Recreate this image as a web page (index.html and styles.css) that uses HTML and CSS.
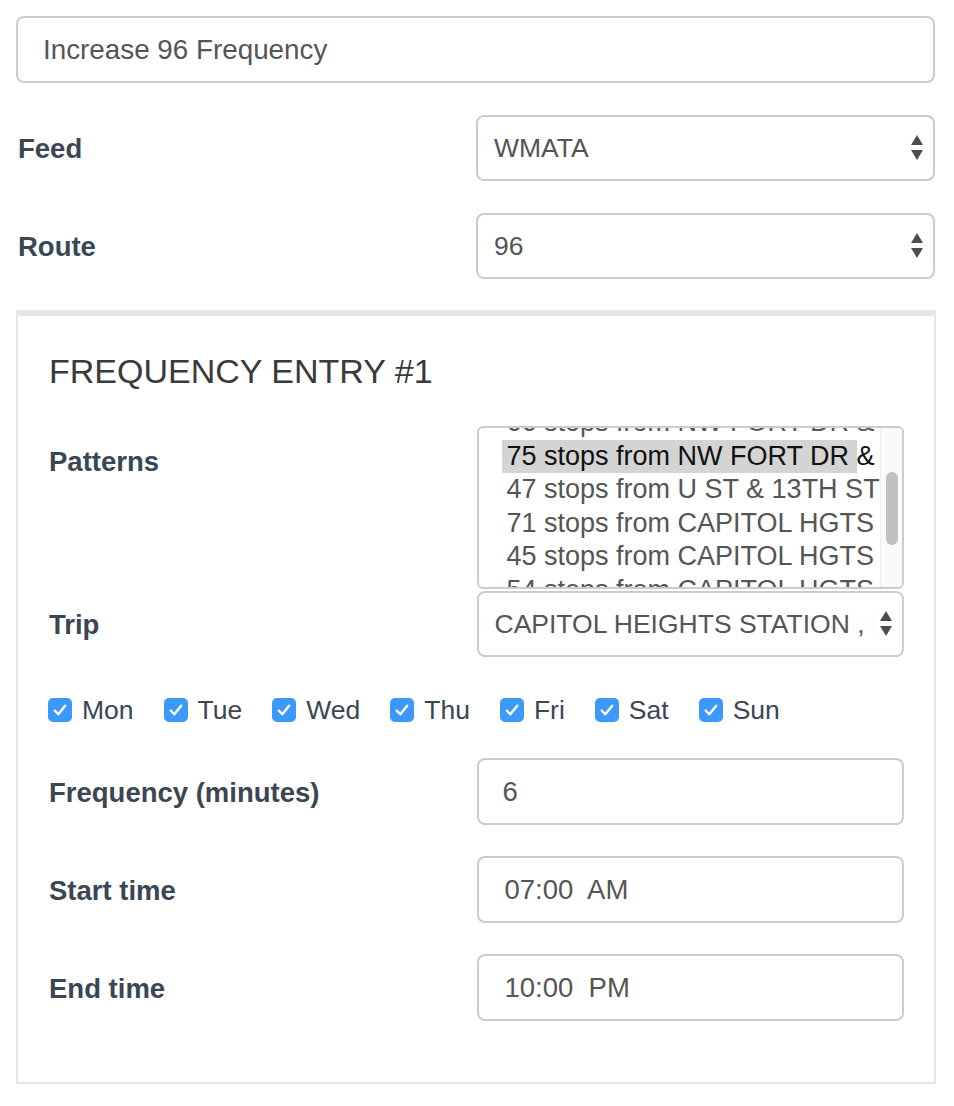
FILE: index.html
```html
<!DOCTYPE html>
<html lang="en">
<head>
<meta charset="utf-8">
<title>Increase 96 Frequency</title>
<link rel="stylesheet" href="styles.css">
</head>
<body>
<div class="page">
  <input class="form-control title-input" type="text" value="Increase 96 Frequency">

  <div class="form-row outer-row first-row">
    <label class="row-label outer-label">Feed</label>
    <div class="row-control">
      <div class="select-box">
        <span class="select-text">WMATA</span>
        <svg class="select-arrows" width="12" height="26" viewBox="0 0 12 26"><polygon points="6,0 12,10 0,10" /><polygon points="0,15 12,15 6,25" /></svg>
      </div>
    </div>
  </div>

  <div class="form-row outer-row">
    <label class="row-label outer-label">Route</label>
    <div class="row-control">
      <div class="select-box">
        <span class="select-text">96</span>
        <svg class="select-arrows" width="12" height="26" viewBox="0 0 12 26"><polygon points="6,0 12,10 0,10" /><polygon points="0,15 12,15 6,25" /></svg>
      </div>
    </div>
  </div>

  <section class="panel">
    <h3 class="panel-title">FREQUENCY ENTRY #1</h3>

    <div class="form-row row-patterns">
      <label class="row-label label-top">Patterns</label>
      <div class="row-control">
        <div class="listbox">
          <div class="listbox-viewport">
            <div class="listbox-options">
              <div class="option">66 stops from NW FORT DR &amp; 18TH ST</div>
              <div class="option selected">75 stops from NW FORT DR &amp; 18TH ST</div>
              <div class="option">47 stops from U ST &amp; 13TH ST NW</div>
              <div class="option">71 stops from CAPITOL HGTS STATION</div>
              <div class="option">45 stops from CAPITOL HGTS STATION</div>
              <div class="option">54 stops from CAPITOL HGTS STATION</div>
            </div>
          </div>
          <div class="listbox-scrollbar"><div class="scroll-thumb"></div></div>
        </div>
      </div>
    </div>

    <div class="form-row row-trip">
      <label class="row-label">Trip</label>
      <div class="row-control">
        <div class="select-box">
          <span class="select-text">CAPITOL HEIGHTS STATION , BAY C</span>
          <svg class="select-arrows" width="12" height="26" viewBox="0 0 12 26"><polygon points="6,0 12,10 0,10" /><polygon points="0,15 12,15 6,25" /></svg>
        </div>
      </div>
    </div>

    <div class="days">
      <label class="day"><span class="check"><svg width="24" height="24" viewBox="0 0 24 24"><path d="M6.8 12.6 L10.3 16.3 L17.2 7.8" /></svg></span>Mon</label>
      <label class="day"><span class="check"><svg width="24" height="24" viewBox="0 0 24 24"><path d="M6.8 12.6 L10.3 16.3 L17.2 7.8" /></svg></span>Tue</label>
      <label class="day"><span class="check"><svg width="24" height="24" viewBox="0 0 24 24"><path d="M6.8 12.6 L10.3 16.3 L17.2 7.8" /></svg></span>Wed</label>
      <label class="day"><span class="check"><svg width="24" height="24" viewBox="0 0 24 24"><path d="M6.8 12.6 L10.3 16.3 L17.2 7.8" /></svg></span>Thu</label>
      <label class="day"><span class="check"><svg width="24" height="24" viewBox="0 0 24 24"><path d="M6.8 12.6 L10.3 16.3 L17.2 7.8" /></svg></span>Fri</label>
      <label class="day"><span class="check"><svg width="24" height="24" viewBox="0 0 24 24"><path d="M6.8 12.6 L10.3 16.3 L17.2 7.8" /></svg></span>Sat</label>
      <label class="day"><span class="check"><svg width="24" height="24" viewBox="0 0 24 24"><path d="M6.8 12.6 L10.3 16.3 L17.2 7.8" /></svg></span>Sun</label>
    </div>

    <div class="form-row row-freq">
      <label class="row-label">Frequency (minutes)</label>
      <div class="row-control"><input class="form-control" type="text" value="6"></div>
    </div>

    <div class="form-row row-time">
      <label class="row-label">Start time</label>
      <div class="row-control"><input class="form-control time-input" type="text" value="07:00  AM"></div>
    </div>

    <div class="form-row row-time">
      <label class="row-label">End time</label>
      <div class="row-control"><input class="form-control time-input" type="text" value="10:00  PM"></div>
    </div>
  </section>
</div>
</body>
</html>
```

FILE: styles.css
```css
* {
  box-sizing: border-box;
}

body {
  margin: 0;
  background: #ffffff;
  font-family: "Liberation Sans", Arial, Helvetica, sans-serif;
  color: #555555;
}

.page {
  width: 920px;
  margin-left: 16px;
  padding-top: 16px;
}

.form-control {
  display: block;
  width: 100%;
  height: 67px;
  margin: 0;
  padding: 0 24px 0 24px;
  border: 2px solid #cccccc;
  border-radius: 8px;
  background: #ffffff;
  font-family: "Liberation Sans", Arial, Helvetica, sans-serif;
  font-size: 27.5px;
  color: #555555;
  outline: none;
}

.title-input {
  width: 919px;
  padding-left: 25px;
  font-size: 27.8px;
}

.form-row {
  display: flex;
  align-items: center;
}

.row-label {
  width: 50%;
  padding-top: 2px;
  font-size: 27.5px;
  font-weight: bold;
  line-height: 36px;
  color: #3a4654;
}

.row-control {
  width: 50%;
}

.outer-label {
  padding-left: 2px;
}

.outer-row {
  margin-top: 32px;
}

.outer-row .row-control {
  padding-right: 1px;
}

.select-box {
  display: flex;
  align-items: center;
  height: 66px;
  padding: 0 10px 0 16px;
  border: 2px solid #cccccc;
  border-radius: 8px;
  background: #ffffff;
  font-size: 26.5px;
  color: #555555;
}

.select-text {
  flex: 1;
  min-width: 0;
  overflow: hidden;
  white-space: nowrap;
}

.select-arrows {
  flex: none;
  margin-left: 6px;
  fill: #4d4d4d;
}

.panel {
  margin-top: 31px;
  width: 920px;
  border: 2px solid #e6e6e6;
  border-top-width: 6px;
  padding: 36px 30px 61px 31px;
}

.panel-title {
  margin: 0;
  font-size: 34px;
  font-weight: normal;
  line-height: 38px;
  color: #3a3a3a;
}

.row-patterns {
  margin-top: 36px;
  align-items: flex-start;
}

.label-top {
  padding-top: 18px;
}

.listbox {
  display: flex;
  height: 163px;
  border: 2px solid #cccccc;
  border-radius: 6px;
  background: #ffffff;
  overflow: hidden;
}

.listbox-viewport {
  flex: 1;
  min-width: 0;
  overflow: hidden;
  padding-left: 23px;
}

.listbox-options {
  margin-top: -22px;
}

.option {
  width: 355px;
  padding-left: 5px;
  font-size: 27px;
  line-height: 33.6px;
  white-space: nowrap;
  color: #555555;
}

.option.selected {
  background: #d4d4d4;
  color: #111111;
}

.listbox-scrollbar {
  flex: none;
  width: 22px;
  border-left: 1px solid #ededed;
  background: #fafafa;
  padding-top: 44px;
}

.scroll-thumb {
  width: 12px;
  height: 73px;
  margin-left: 5px;
  border-radius: 6px;
  background: #c1c1c1;
}

.row-trip {
  margin-top: 2px;
}

.days {
  display: flex;
  gap: 30px;
  margin-top: 41px;
  margin-left: -1px;
  height: 24px;
  align-items: center;
}

.day {
  display: flex;
  align-items: center;
  gap: 10px;
  font-size: 26.5px;
  color: #3a4654;
}

.check {
  display: block;
  width: 24px;
  height: 24px;
  border-radius: 5px;
  background: #3b99fc;
}

.check svg {
  display: block;
  fill: none;
  stroke: #ffffff;
  stroke-width: 2.4;
  stroke-linecap: round;
  stroke-linejoin: round;
}

.row-freq {
  margin-top: 36px;
}

.row-time {
  margin-top: 31px;
}

.time-input {
  padding-left: 26px;
}
```
